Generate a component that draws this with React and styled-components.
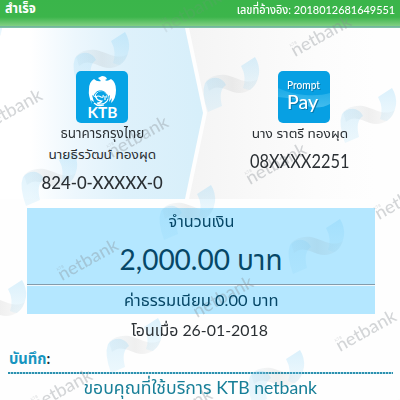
import React from "react";
import styled, { createGlobalStyle } from "styled-components";

const Global = createGlobalStyle`
  * { box-sizing: border-box; }
  body { margin: 0; background: #fff; }
`;

const Page = styled.main`
  position: relative;
  width: 400px;
  height: 400px;
  overflow: hidden;
  background: #fefefe;
  font-family: Lato, "Noto Sans Thai", "Noto Sans", sans-serif;
  color: #2b3034;
`;

const Header = styled.header`
  height: 28px;
  padding: 0 5px;
  display: flex;
  justify-content: space-between;
  background: linear-gradient(#3ab54a 0, #3cb54b 17px, #82cf83 26px, #6cb199 26px, #83c5a6 28px);
  color: #fff;
`;

const Line = styled.div`
  height: ${(p) => p.$h}px;
  display: flex;
  justify-content: center;
  align-items: center;
  flex: none;
`;

/* z-index keeps the lettering above the watermark layer */
const Fit = styled.span`
  z-index: 2;
  white-space: nowrap;
  font-size: ${(p) => p.$size}px;
  line-height: 1;
  font-weight: ${(p) => p.$weight || 400};
  color: ${(p) => p.$color || "inherit"};
  transform: translateY(${(p) => p.$dy || 0}px) scale(${(p) => p.$sx || 1}, ${(p) => p.$sy || 1});
  transform-origin: ${(p) => p.$origin || "center"};
`;

const Transfer = styled.section`
  height: 171px;
  display: flex;
  background: #fefefe;
`;

const Party = styled.div`
  position: relative;
  padding-top: 43px;
  display: flex;
  flex-direction: column;
  align-items: center;
  &::before {
    content: "";
    position: absolute;
    inset: 0;
  }
`;

const Sender = styled(Party)`
  width: 204px;
  &::before {
    background: linear-gradient(90deg, #fff 30px, #edf7fd 75px, #def1fb 125px, #d7effa 200px);
    clip-path: polygon(0 0, 185px 0, 203px 85px, 185px 100%, 0 100%);
  }
`;

const Receiver = styled(Party)`
  width: 190px;
  margin-left: -18px;
  padding-left: 46px;
  ${Line} {
    margin-right: 9px;
  }
  &::before {
    background: linear-gradient(90deg, #f4f4f4, #f8f8f8 60px, #fcfcfc 130px, #fefefe);
    clip-path: polygon(3px 0, 100% 0, 100% 100%, 3px 100%, 21px 85px);
  }
`;

const Logo = styled.svg`
  z-index: 2;
  width: 52px;
  height: 52px;
  flex: none;
  display: block;
`;

const ShadedLetters = styled.g`
  font-family: Lato, sans-serif;
  fill: #fff;
  filter: drop-shadow(1px 1px 0.4px #0679ac);
`;

const Amounts = styled.section`
  width: 348px;
  margin: 9px 0 0 27px;
  color: #064767;
`;

const Total = styled.div`
  height: 76px;
  background: #b4e7ff;
`;

const Rule = styled.hr`
  height: 2px;
  margin: 0;
  border: 0;
  border-top: 1px solid #849cac;
  border-bottom: 1px solid #eef8fd;
`;

const Fee = styled.div`
  height: 28px;
  background: #b4e7ff;
`;

const Note = styled.div`
  height: 26px;
  padding-left: 9px;
  display: flex;
  align-items: center;
`;

const Colon = styled.span`
  color: #1f3038;
`;

const Dots = styled.div`
  height: 2px;
  margin: 0 7px 0 8px;
  background: repeating-linear-gradient(90deg, #2c91af 0 2px, #a9d6e4 2px 3px);
`;

const Watermark = styled.svg`
  position: absolute;
  z-index: 1;
  left: 0;
  top: 0;
  pointer-events: none;
`;

const ribbons = [
  [74, 32], [204, 57], [341, 88], [22, 151], [160, 185], [289, 219],
  [-29, 280], [107, 318], [249, 350], [383, 382], [-53, 12],
];

const marks = [
  [295, 57], [165, 33], [-14, 131], [112, 158], [250, 185], [379, 220],
  [62, 281], [197, 318], [340, 352], [36, 411], [156, 430],
];

function Background() {
  return (
    <Watermark width="400" height="400" viewBox="0 0 400 400">
      <defs>
        <linearGradient id="band" x1="0" x2="1">
          <stop offset="0" stopColor="#9cc3d6" stopOpacity=".1" />
          <stop offset=".5" stopColor="#777" stopOpacity=".11" />
          <stop offset="1" stopColor="#999" stopOpacity=".05" />
        </linearGradient>
        <linearGradient id="blade" x1="0" y1="0" x2="0" y2="1">
          <stop offset="0" stopColor="#70c8f5" stopOpacity=".25" />
          <stop offset="1" stopColor="#80d0f5" stopOpacity=".12" />
        </linearGradient>
        <linearGradient id="tail" x1="0" y1="0" x2="0" y2="1">
          <stop offset="0" stopColor="#80cdf5" stopOpacity=".24" />
          <stop offset="1" stopColor="#80d0f5" stopOpacity=".14" />
        </linearGradient>
        <clipPath id="body"><rect y="28" width="400" height="372" /></clipPath>
      </defs>
      <g clipPath="url(#body)">
        {ribbons.map(([x, y]) => (
          <g key={`${x}-${y}`} transform={`translate(${x} ${y})`}>
            <path d="M2 24C7 19 14 17 22 18C33 20 43 29 54 22C50 34 39 38 29 35C20 32 13 27 5 34Z" fill="url(#band)" />
            <path d="M37 9L51 0Q56 8 55 17Q53 28 46 33Q43 33 39 31Q43 20 37 9Z" fill="url(#blade)" />
            <path d="M1 26Q6 20 14 21Q20 23 22 28Q14 33 18 49L4 55Q-3 36 1 26Z" fill="url(#tail)" />
          </g>
        ))}
      </g>
      {marks.map(([x, y]) => (
        <g key={`${x}-${y}`} transform={`translate(${x} ${y}) rotate(-29)`} fill="#858b91" fontFamily="Lato, sans-serif">
          <text fontSize="18" fontWeight="500" textLength="66" lengthAdjust="spacingAndGlyphs" opacity={y < 34 ? 0.15 : 0.35}>netbank</text>
          <text x="1" y="-11" fontSize="4" opacity=".3">KTB</text>
        </g>
      ))}
    </Watermark>
  );
}

function KtbLogo() {
  return (
    <Logo viewBox="0 0 52 52">
      <rect width="52" height="52" rx="5" fill="#07a3e5" />
      <path d="M22 7L26 5Q30 5 31 8L29 9Q31 11 35 8Q40 11 40 19Q40 28 35 32L36 27L33 31L34 24L30 27Q32 20 26 20Q19 20 20 27L16 24L18 31L15 29L16 33Q12 25 13 18Q13 11 18 8Q21 11 25 10Z" fill="#fff" />
      <path d="M20 22Q24 18 29 21Q34 25 31 30Q27 35 21 32Q25 32 26 30Q21 30 20 26Q22 24 25 26Q28 27 27 24M18 32Q22 36 28 34M29 25V29" fill="none" stroke="#fff" strokeWidth="1.2" />
      <path d="M18 25Q20 19 26 20Q32 22 32 28" fill="none" stroke="#07a3e5" strokeWidth="1" />
      <text x="11.5" y="47" fill="#fff" fontFamily="Lato, sans-serif" fontSize="14.5" fontWeight="700" textLength="30" lengthAdjust="spacingAndGlyphs">KTB</text>
    </Logo>
  );
}

function PromptPayLogo() {
  return (
    <Logo viewBox="0 0 52 52">
      <defs>
        <linearGradient id="shine" x1="0" y1="0" x2="0" y2="1">
          <stop stopColor="#23afe9" />
          <stop offset="1" stopColor="#55c5f1" />
        </linearGradient>
      </defs>
      <rect width="52" height="52" rx="5" fill="#07a0e3" />
      <path d="M0 17Q13 23 27 24Q42 25 52 22V33Q43 38 32 36Q20 27 0 26Z" fill="url(#shine)" opacity=".75" />
      <ShadedLetters>
        <text x="9" y="18" fontSize="12" fontWeight="500" textLength="33" lengthAdjust="spacingAndGlyphs">Prompt</text>
        <text x="9" y="37.5" fontSize="20" fontWeight="500" textLength="31" lengthAdjust="spacingAndGlyphs">Pay</text>
      </ShadedLetters>
    </Logo>
  );
}

export default function App() {
  return (
    <>
      <Global />
      <Page>
        <Header>
          <Line $h={18}><Fit $size={14} $weight={700} $sx={0.9} $dy={-1} $origin="left">สำเร็จ</Fit></Line>
          <Line $h={20}><Fit $size={12} $weight={500} $sx={0.91} $origin="right">เลขที่อ้างอิง: 2018012681649551</Fit></Line>
        </Header>
        <Transfer>
          <Sender>
            <KtbLogo />
            <Line $h={20}><Fit $size={13} $sx={1.04} $sy={1.05}>ธนาคารกรุงไทย</Fit></Line>
            <Line $h={24}><Fit $size={13} $sx={1.05} $dy={-1}>นายธีรวัฒน์ ทองผุด</Fit></Line>
            <Line $h={30}><Fit $size={18} $weight={500} $sx={0.93}>824-0-XXXXX-0</Fit></Line>
          </Sender>
          <Receiver>
            <PromptPayLogo />
            <Line $h={20}><Fit $size={13} $sx={1.05}>นาง ราตรี ทองผุด</Fit></Line>
            <Line $h={36}><Fit $size={18} $sx={0.91} $sy={1.05}>08XXXX2251</Fit></Line>
          </Receiver>
        </Transfer>
        <Amounts>
          <Total>
            <Line $h={26}><Fit $size={15} $sx={1.08}>จำนวนเงิน</Fit></Line>
            <Line $h={50}><Fit $size={28}>2,000.00 บาท</Fit></Line>
          </Total>
          <Rule />
          <Fee><Line $h={28}><Fit $size={15} $sx={1.1}>ค่าธรรมเนียม 0.00 บาท</Fit></Line></Fee>
        </Amounts>
        <Line $h={32}><Fit $size={15} $sx={1.06}>โอนเมื่อ 26-01-2018</Fit></Line>
        <Note>
          <Fit $size={16} $weight={700} $color="#1695c0" $sx={0.92} $dy={-1} $origin="left">
            บันทึก<Colon>:</Colon>
          </Fit>
        </Note>
        <Dots />
        <Line $h={26}><Fit $size={18} $color="#187f98" $sx={0.98}>ขอบคุณที่ใช้บริการ KTB netbank</Fit></Line>
        <Background />
      </Page>
    </>
  );
}
